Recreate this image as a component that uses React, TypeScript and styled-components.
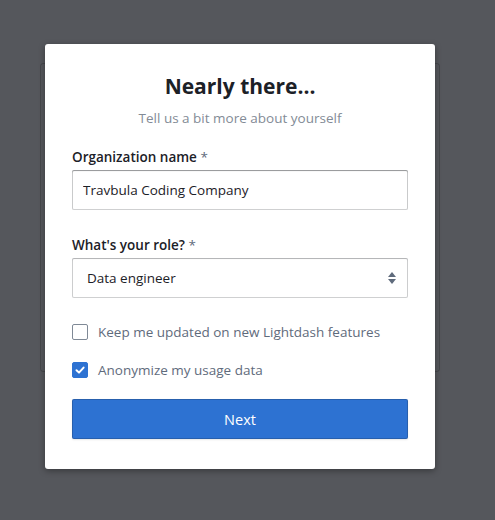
import styled, { createGlobalStyle } from 'styled-components';

const GlobalStyle = createGlobalStyle`
  html, body {
    margin: 0;
    padding: 0;
    background: #55575c;
    font-family: 'Open Sans', 'Noto Sans', sans-serif;
  }
`;

const Page = styled.div`
  position: relative;
  width: 495px;
  height: 520px;
  padding: 63px 55px 0 40px;
  box-sizing: border-box;
`;

const BackCard = styled.div`
  height: 309px;
  border: 1px solid rgba(0, 0, 0, 0.18);
  border-radius: 3px;
  box-sizing: border-box;
`;

const Overlay = styled.div`
  position: absolute;
  top: 44px;
  left: 45px;
`;

const Dialog = styled.form`
  width: 390px;
  height: 425px;
  box-sizing: border-box;
  background: #ffffff;
  border-radius: 3px;
  box-shadow: 0 2px 6px rgba(0, 0, 0, 0.35);
  padding: 28px 27px 30px;
  display: flex;
  flex-direction: column;
`;

const Title = styled.h1`
  margin: 0;
  font-size: 21px;
  line-height: 28px;
  font-weight: 700;
  color: #1c2127;
  text-align: center;
`;

const Subtitle = styled.p`
  margin: 9px 0 0;
  font-size: 13.5px;
  line-height: 18px;
  color: #838b96;
  text-align: center;
`;

const Field = styled.div<{ $top: number }>`
  margin-top: ${p => p.$top}px;
  display: flex;
  flex-direction: column;
`;

const Label = styled.label`
  font-size: 13.5px;
  line-height: 18px;
  font-weight: 600;
  color: #1c2127;
  margin-bottom: 4px;

  span {
    color: #5f6b7c;
    font-weight: 400;
  }
`;

const TextInput = styled.input`
  height: 40px;
  box-sizing: border-box;
  border: none;
  border-radius: 2px;
  box-shadow: inset 0 0 0 1px rgba(17, 20, 24, 0.2), inset 0 1px 1px rgba(17, 20, 24, 0.3);
  padding: 0 11px;
  font-family: inherit;
  font-size: 13.5px;
  color: #1c2127;
  outline: none;
`;

const SelectBox = styled.div`
  height: 40px;
  box-sizing: border-box;
  border-radius: 2px;
  box-shadow: inset 0 0 0 1px rgba(17, 20, 24, 0.2), inset 0 1px 1px rgba(17, 20, 24, 0.15);
  padding: 0 11px 0 15px;
  display: flex;
  align-items: center;
  justify-content: space-between;
  font-size: 13.5px;
  color: #1c2127;
`;

const Checks = styled.div`
  margin-top: 24px;
  display: flex;
  flex-direction: column;
  gap: 18px;
`;

const CheckRow = styled.label`
  display: flex;
  align-items: center;
  gap: 10px;
  height: 20px;
  font-size: 13.5px;
  color: #5f6b7c;
`;

const Box = styled.span<{ $checked?: boolean }>`
  width: 16px;
  height: 16px;
  box-sizing: border-box;
  border-radius: 2px;
  display: flex;
  align-items: center;
  justify-content: center;
  background: ${p => (p.$checked ? '#2d72d2' : '#ffffff')};
  border: 1px solid ${p => (p.$checked ? '#2d72d2' : '#7f8996')};
`;

const NextButton = styled.button`
  margin-top: 19px;
  height: 40px;
  border: none;
  border-radius: 2px;
  background: #2d72d2;
  box-shadow: inset 0 0 0 1px rgba(17, 20, 24, 0.2), 0 1px 2px rgba(17, 20, 24, 0.1);
  color: #ffffff;
  font-family: inherit;
  font-size: 14.5px;
  cursor: pointer;
`;

const App = () => (
  <>
    <GlobalStyle />
    <Page>
      <BackCard />
      <Overlay>
        <Dialog onSubmit={e => e.preventDefault()}>
          <Title>Nearly there...</Title>
          <Subtitle>Tell us a bit more about yourself</Subtitle>
          <Field $top={21}>
            <Label>
              Organization name <span>*</span>
            </Label>
            <TextInput defaultValue="Travbula Coding Company" />
          </Field>
          <Field $top={26}>
            <Label>
              What's your role? <span>*</span>
            </Label>
            <SelectBox>
              Data engineer
              <svg width="10" height="14" viewBox="0 0 10 14">
                <path d="M5 1 L9 6 L1 6 Z" fill="#5f6b7c" />
                <path d="M1 8 L9 8 L5 13 Z" fill="#5f6b7c" />
              </svg>
            </SelectBox>
          </Field>
          <Checks>
            <CheckRow>
              <Box />
              Keep me updated on new Lightdash features
            </CheckRow>
            <CheckRow>
              <Box $checked>
                <svg width="12" height="12" viewBox="0 0 12 12">
                  <path d="M2.5 6.2 L5 8.6 L9.6 3.6" fill="none" stroke="#fff" strokeWidth="2" strokeLinecap="round" strokeLinejoin="round" />
                </svg>
              </Box>
              Anonymize my usage data
            </CheckRow>
          </Checks>
          <NextButton type="submit">Next</NextButton>
        </Dialog>
      </Overlay>
    </Page>
  </>
);

export default App;
